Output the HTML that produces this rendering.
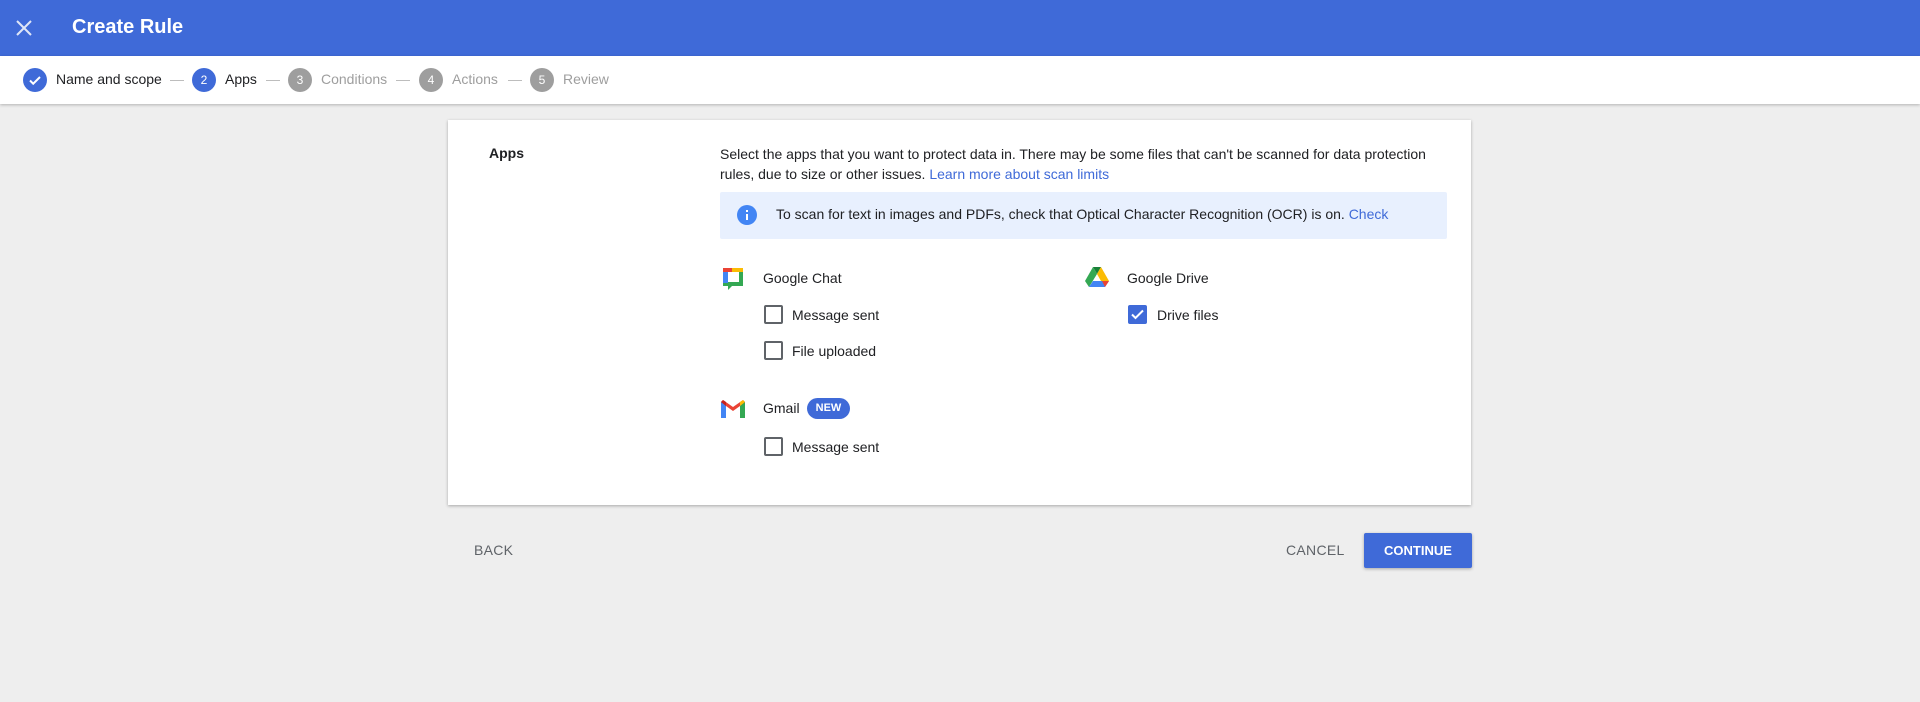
<!DOCTYPE html>
<html><head><meta charset="utf-8"><style>
*{box-sizing:border-box;margin:0;padding:0}
body{width:1920px;height:702px;background:#eeeeee;font-family:"Liberation Sans",Arial,sans-serif;color:#202124;position:relative;overflow:hidden;font-size:14px}
.hdr{position:absolute;left:0;top:0;width:1920px;height:56px;background:#3f6ad8}
.hdr .t{position:absolute;left:72px;top:16px;color:#fff;font-size:20px;font-weight:bold}
.step{position:absolute;left:0;top:56px;width:1920px;height:48px;background:#fff;box-shadow:0 1px 3px rgba(0,0,0,.25)}
.c{position:absolute;top:12px;width:24px;height:24px;border-radius:50%;color:#fff;font-size:12px;text-align:center;line-height:24px}
.s{position:absolute;top:15px;font-size:14px}
.d{position:absolute;top:24px;width:14px;height:1px;background:#bdbdbd}
.card{position:absolute;left:448px;top:120px;width:1023px;height:385px;background:#fff;box-shadow:0 1px 3px rgba(0,0,0,.3)}
.abs{position:absolute}
a{color:#3f6ad8;text-decoration:none}
.cb{position:absolute;width:19px;height:19px;border:2px solid #5f6368;border-radius:2px}
.lbl{position:absolute;font-size:14px}
.btn{position:absolute;font-size:14px;letter-spacing:.3px}
</style></head><body>
<div class="hdr">
<svg class="abs" style="left:15px;top:19px" width="18" height="18" viewBox="0 0 18 18"><path d="M2 2L16 16M16 2L2 16" stroke="#dfe6f7" stroke-width="2"/></svg>
<div class="t">Create Rule</div></div>
<div class="step">
<div class="c" style="left:23px;background:#3f6ad8"><svg width="24" height="24" viewBox="0 0 24 24"><path d="M7 12.5l3.2 3.2L17 9" stroke="#fff" stroke-width="2" fill="none"/></svg></div>
<div class="s" style="left:56px">Name and scope</div>
<div class="d" style="left:170px"></div>
<div class="c" style="left:192px;background:#3f6ad8">2</div>
<div class="s" style="left:225px">Apps</div>
<div class="d" style="left:266px"></div>
<div class="c" style="left:288px;background:#9e9e9e">3</div>
<div class="s" style="left:321px;color:#9e9e9e">Conditions</div>
<div class="d" style="left:396px"></div>
<div class="c" style="left:419px;background:#9e9e9e">4</div>
<div class="s" style="left:452px;color:#9e9e9e">Actions</div>
<div class="d" style="left:508px"></div>
<div class="c" style="left:530px;background:#9e9e9e">5</div>
<div class="s" style="left:563px;color:#9e9e9e">Review</div>
</div>
<div class="card"></div>
<div class="abs" style="left:489px;top:145px;font-weight:bold">Apps</div>
<div class="abs" style="left:720px;top:144px;width:730px;line-height:20px">Select the apps that you want to protect data in. There may be some files that can't be scanned for data protection rules, due to size or other issues. <a>Learn more about scan limits</a></div>
<div class="abs" style="left:720px;top:192px;width:727px;height:47px;background:#e8f0fe;border-radius:2px"></div>
<svg class="abs" style="left:737px;top:205px" width="20" height="20" viewBox="0 0 20 20"><circle cx="10" cy="10" r="10" fill="#4285f4"/><rect x="9" y="9" width="2" height="6" fill="#fff"/><rect x="9" y="5" width="2" height="2" fill="#fff"/></svg>
<div class="abs" style="left:776px;top:206px">To scan for text in images and PDFs, check that Optical Character Recognition (OCR) is on. <a>Check</a></div>

<svg class="abs" style="left:721px;top:266px" width="24" height="24" viewBox="0 0 24 24"><rect x="2" y="2" width="20" height="18" fill="#34a853"/><rect x="2" y="2" width="5" height="15" fill="#4285f4"/><rect x="2" y="2" width="9" height="4" fill="#ea4335"/><rect x="11" y="2" width="11" height="4" fill="#fbbc04"/><rect x="7" y="6" width="11" height="10" fill="#fff"/><path d="M7 20v4l4-4z" fill="#34a853"/></svg>
<div class="lbl" style="left:763px;top:270px">Google Chat</div>
<div class="cb" style="left:764px;top:305px"></div><div class="lbl" style="left:792px;top:307px">Message sent</div>
<div class="cb" style="left:764px;top:341px"></div><div class="lbl" style="left:792px;top:343px">File uploaded</div>

<svg class="abs" style="left:1085px;top:266px" width="24" height="22" viewBox="0 0 24 22"><path d="M8 1h8l-4 7z" fill="#188038"/><path d="M8 1L0 15l4 6 8-13z" fill="#34a853"/><path d="M16 1l8 14h-8L12 8z" fill="#fbbc04"/><path d="M24 15l-4 6H4l4-6z" fill="#4285f4"/><path d="M24 15l-4 6-3-6z" fill="#ea4335"/></svg>
<div class="lbl" style="left:1127px;top:270px">Google Drive</div>
<div class="abs" style="left:1128px;top:305px;width:19px;height:19px;background:#3f6ad8;border-radius:2px"><svg width="19" height="19" viewBox="0 0 19 19"><path d="M4 9.5l3.5 3.5L15 5.5" stroke="#fff" stroke-width="2" fill="none"/></svg></div>
<div class="lbl" style="left:1157px;top:307px">Drive files</div>

<svg class="abs" style="left:721px;top:399px" width="24" height="19" viewBox="0 0 24 19"><path d="M0 3v16h5V7l7 5 7-5v12h5V3l-2-2-10 7L2 1z" fill="#ea4335"/><path d="M0 3v16h5V7z" fill="#4285f4"/><path d="M19 7v12h5V3z" fill="#34a853"/><path d="M24 3l-2-2-3 2v4l5-4z" fill="#fbbc04"/><path d="M0 3l2-2 3 2v4z" fill="#c5221f"/></svg>
<div class="lbl" style="left:763px;top:400px">Gmail</div>
<div class="abs" style="left:807px;top:398px;width:43px;height:21px;border-radius:11px;background:#3f6ad8;color:#fff;font-size:11px;font-weight:bold;text-align:center;line-height:21px">NEW</div>
<div class="cb" style="left:764px;top:437px"></div><div class="lbl" style="left:792px;top:439px">Message sent</div>

<div class="btn" style="left:474px;top:542px;color:#5f6368">BACK</div>
<div class="btn" style="left:1286px;top:542px;color:#5f6368">CANCEL</div>
<div class="abs" style="left:1364px;top:533px;width:108px;height:35px;background:#3f6ad8;border-radius:2px;box-shadow:0 1px 3px rgba(0,0,0,.3);color:#fff;font-weight:bold;font-size:13px;text-align:center;line-height:35px">CONTINUE</div>
</body></html>
